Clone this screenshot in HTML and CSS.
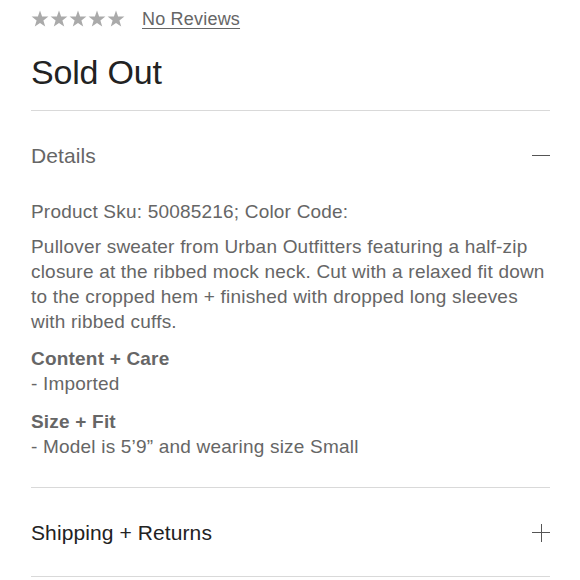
FILE: index.html
```html
<!DOCTYPE html>
<html>
<head>
<meta charset="utf-8">
<link rel="stylesheet" href="styles.css">
</head>
<body>
<div class="product">
  <div class="rating">
    <span class="stars">
      <svg width="94" height="18" viewBox="0 0 94 18">
        <g fill="#aaaaaa">
          <polygon points="9,0.5 11.1,6.4 17.4,6.6 12.4,10.5 14.2,16.6 9,13 3.8,16.6 5.6,10.5 0.6,6.6 6.9,6.4"/>
          <polygon transform="translate(19,0)" points="9,0.5 11.1,6.4 17.4,6.6 12.4,10.5 14.2,16.6 9,13 3.8,16.6 5.6,10.5 0.6,6.6 6.9,6.4"/>
          <polygon transform="translate(38,0)" points="9,0.5 11.1,6.4 17.4,6.6 12.4,10.5 14.2,16.6 9,13 3.8,16.6 5.6,10.5 0.6,6.6 6.9,6.4"/>
          <polygon transform="translate(57,0)" points="9,0.5 11.1,6.4 17.4,6.6 12.4,10.5 14.2,16.6 9,13 3.8,16.6 5.6,10.5 0.6,6.6 6.9,6.4"/>
          <polygon transform="translate(76,0)" points="9,0.5 11.1,6.4 17.4,6.6 12.4,10.5 14.2,16.6 9,13 3.8,16.6 5.6,10.5 0.6,6.6 6.9,6.4"/>
        </g>
      </svg>
    </span>
    <a class="reviews" href="#">No Reviews</a>
  </div>
  <h1 class="title">Sold Out</h1>

  <section class="accordion open">
    <div class="acc-head">
      <span class="acc-title muted">Details</span>
      <span class="icon minus"></span>
    </div>
    <div class="acc-body">
      <p class="sku">Product Sku: 50085216; Color Code:</p>
      <p class="desc">Pullover sweater from Urban Outfitters featuring a half-zip closure at the ribbed mock neck. Cut with a relaxed fit down to the cropped hem + finished with dropped long sleeves with ribbed cuffs.</p>
      <div class="spec first">
        <div class="spec-title">Content + Care</div>
        <div>- Imported</div>
      </div>
      <div class="spec">
        <div class="spec-title">Size + Fit</div>
        <div>- Model is 5’9” and wearing size Small</div>
      </div>
    </div>
  </section>

  <section class="accordion">
    <div class="acc-head ship">
      <span class="acc-title">Shipping + Returns</span>
      <span class="icon plus"></span>
    </div>
  </section>
</div>
</body>
</html>
```
FILE: styles.css
```css
* { box-sizing: border-box; }
html, body { margin: 0; padding: 0; background: #fff; }
body {
  font-family: "Liberation Sans", Arial, Helvetica, sans-serif;
  color: #222;
}
.product {
  width: 550px;
  padding-left: 31px;
}
.rating {
  height: 38px;
  display: flex;
  align-items: center;
  gap: 17px;
}
.stars { display: flex; align-items: center; height: 18px; }
.stars svg { display: block; }
.reviews {
  font-size: 18px;
  color: #666;
  text-decoration: underline;
  text-underline-offset: 3px;
  text-decoration-thickness: 1px;
  letter-spacing: 0.2px;
}
.title {
  margin: 14px 0 0;
  font-size: 34px;
  line-height: 40px;
  font-weight: 400;
  color: #222;
  padding-bottom: 18px;
  border-bottom: 1px solid #d9d9d9;
  letter-spacing: -0.2px;
}
.accordion { border-bottom: 1px solid #d9d9d9; }
.acc-head {
  height: 89px;
  display: flex;
  align-items: center;
  justify-content: space-between;
}
.acc-head.ship { height: 88px; padding-top: 1px; }
.acc-title { font-size: 21px; color: #222; letter-spacing: 0.1px; }
.acc-title.muted { color: #666; }
.icon { position: relative; width: 18px; height: 18px; display: block; }
.icon::before {
  content: "";
  position: absolute;
  left: 0; right: 0; top: 8.5px;
  height: 1px;
  background: #555;
}
.plus::after {
  content: "";
  position: absolute;
  top: 0; bottom: 0; left: 8.5px;
  width: 1px;
  background: #555;
}
.acc-body {
  font-size: 19px;
  line-height: 25px;
  color: #666;
  letter-spacing: 0.2px;
  padding-bottom: 28px;
}
.acc-body p { margin: 0; }
.sku { margin-top: -1px !important; }
.desc { margin-top: 10px !important; }
.spec { margin-top: 12px; }
.spec + .spec { margin-top: 13px; }
.spec-title { font-weight: 700; color: #666; }
```
